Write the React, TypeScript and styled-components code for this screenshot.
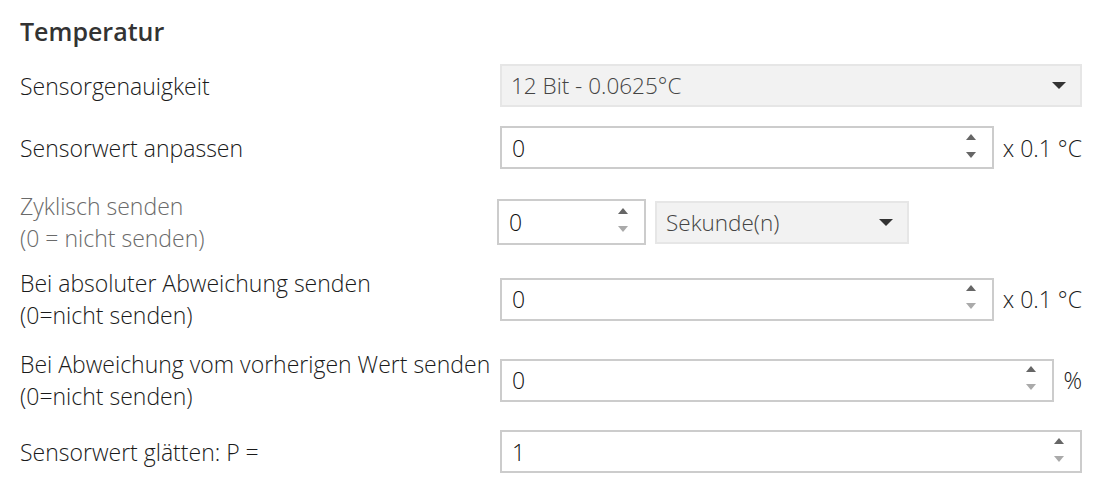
import React from 'react';
import styled, {createGlobalStyle} from "styled-components";

const GlobalStyle = createGlobalStyle`
    body {
        margin: 0;
        background: #ffffff;
        font-family: "Open Sans", "Noto Sans", sans-serif;
        color: #1f1f1f;
    }
`;

const Page = styled.div`
    padding: 16px 0 0 20px;
    width: 1062px;
`;

const Title = styled.h2`
    margin: 0;
    font-size: 25px;
    font-weight: 600;
    line-height: 30px;
    color: #333333;
`;

const Row = styled.div<{ $top: number }>`
    display: grid;
    grid-template-columns: 480px 582px;
    align-items: center;
    margin-top: ${p => p.$top}px;
`;

const Label = styled.div<{ $muted?: boolean }>`
    font-size: 23px;
    font-weight: 300;
    line-height: 32px;
    color: ${p => p.$muted ? "#6a6a6a" : "#1a1a1a"};
    white-space: nowrap;
`;

const Controls = styled.div`
    display: flex;
    align-items: center;
    gap: 9px;
`;

const Select = styled.div<{ $width?: number }>`
    display: flex;
    align-items: center;
    box-sizing: border-box;
    height: 43px;
    width: ${p => p.$width ? `${p.$width}px` : "100%"};
    padding: 0 14px 0 9px;
    background: #f2f2f2;
    border: 2px solid #e6e6e6;
    font-size: 22.5px;
    font-weight: 300;
    color: #444444;
`;

const SelectText = styled.span`
    flex: 1;
`;

const Caret = styled.span`
    width: 0;
    height: 0;
    border-left: 7px solid transparent;
    border-right: 7px solid transparent;
    border-top: 7px solid #333333;
`;

const Spin = styled.div<{ $width?: number; $height?: number; $shift?: number }>`
    display: flex;
    align-items: center;
    box-sizing: border-box;
    height: ${p => p.$height ?? 43}px;
    width: ${p => p.$width ? `${p.$width}px` : "auto"};
    flex: ${p => p.$width ? "none" : 1};
    margin-left: ${p => p.$shift ?? 0}px;
    padding: 0 16px 0 10px;
    background: #ffffff;
    border: 2px solid #cccccc;
    font-size: 23px;
    font-weight: 300;
    color: #111111;
`;

const Value = styled.span`
    flex: 1;
`;

const Arrows = styled.div`
    display: flex;
    flex-direction: column;
    align-items: center;
    gap: 12px;
    margin-top: -4px;
`;

const ArrowUp = styled.span<{ $off?: boolean }>`
    width: 0;
    height: 0;
    border-left: 5px solid transparent;
    border-right: 5px solid transparent;
    border-bottom: 6px solid ${p => p.$off ? "#aaaaaa" : "#666666"};
`;

const ArrowDown = styled.span<{ $off?: boolean }>`
    width: 0;
    height: 0;
    border-left: 5px solid transparent;
    border-right: 5px solid transparent;
    border-top: 6px solid ${p => p.$off ? "#aaaaaa" : "#666666"};
`;

const Unit = styled.span`
    font-size: 23px;
    font-weight: 300;
    color: #1a1a1a;
    white-space: nowrap;
`;

interface SpinProps {
    value: string;
    downOff?: boolean;
    width?: number;
    height?: number;
    shift?: number;
}

function SpinBox(props: SpinProps) {
    const { value, downOff, width, height, shift } = props;
    return (
        <Spin $width={width} $height={height} $shift={shift}>
            <Value>{value}</Value>
            <Arrows>
                <ArrowUp />
                <ArrowDown $off={downOff} />
            </Arrows>
        </Spin>
    );
}

export default function App() {
    return (
        <Page>
            <GlobalStyle />
            <Title>Temperatur</Title>

            <Row $top={18}>
                <Label>Sensorgenauigkeit</Label>
                <Select>
                    <SelectText>12 Bit - 0.0625°C</SelectText>
                    <Caret />
                </Select>
            </Row>

            <Row $top={19}>
                <Label>Sensorwert anpassen</Label>
                <Controls>
                    <SpinBox value="0" />
                    <Unit>x 0.1 °C</Unit>
                </Controls>
            </Row>

            <Row $top={21}>
                <Label $muted>Zyklisch senden<br />(0 = nicht senden)</Label>
                <Controls>
                    <SpinBox value="0" downOff width={149} height={46} shift={-3} />
                    <Select $width={254}>
                        <SelectText>Sekunde(n)</SelectText>
                        <Caret />
                    </Select>
                </Controls>
            </Row>

            <Row $top={13}>
                <Label>Bei absoluter Abweichung senden<br />(0=nicht senden)</Label>
                <Controls>
                    <SpinBox value="0" downOff />
                    <Unit>x 0.1 °C</Unit>
                </Controls>
            </Row>

            <Row $top={17}>
                <Label>Bei Abweichung vom vorherigen Wert senden<br />(0=nicht senden)</Label>
                <Controls>
                    <SpinBox value="0" downOff />
                    <Unit>%</Unit>
                </Controls>
            </Row>

            <Row $top={18}>
                <Label>Sensorwert glätten: P =</Label>
                <Controls>
                    <SpinBox value="1" downOff />
                </Controls>
            </Row>
        </Page>
    );
}
